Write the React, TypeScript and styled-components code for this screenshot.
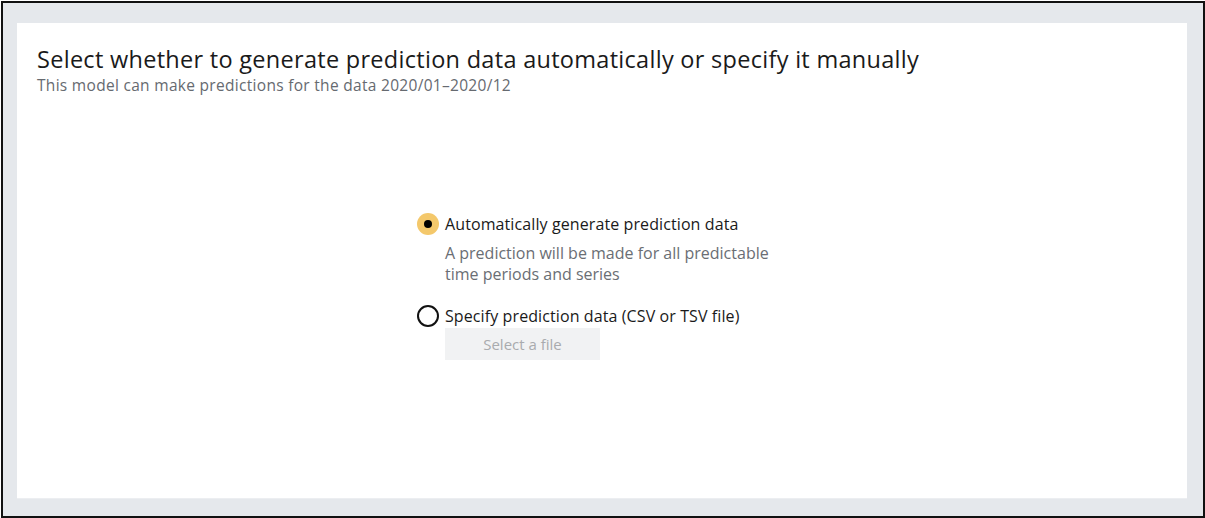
import React from "react";
import styled, { createGlobalStyle } from "styled-components";

const Global = createGlobalStyle`
  html, body { margin: 0; padding: 0; background: #ffffff; }
  body { font-family: "Open Sans", "Noto Sans", sans-serif; }
  * { box-sizing: border-box; }
`;

const Frame = styled.div`
  margin: 1px 0 0 1px;
  width: 1204px;
  height: 517px;
  border: 2px solid #111;
  background: #e5e8ec;
  padding: 20px 16px 17px 14px;
  display: flex;
`;

const Panel = styled.div`
  flex: 1;
  background: #ffffff;
  border-bottom: 1px solid #eceef1;
  padding: 21px 20px 0 20px;
  display: flex;
  flex-direction: column;
`;

const Title = styled.h1`
  margin: 0;
  font-size: 23.5px;
  font-weight: 400;
  line-height: 30px;
  color: #1a1a1a;
  letter-spacing: 0.29px;
`;

const Subtitle = styled.p`
  margin: 2px 0 0 0;
  font-size: 15.5px;
  line-height: 18px;
  color: #666a70;
  letter-spacing: 0.3px;
`;

const Center = styled.div`
  display: flex;
  justify-content: center;
  margin-top: 119px;
`;

const Group = styled.div`
  width: 370px;
  display: flex;
  flex-direction: column;
`;

const Option = styled.label`
  display: flex;
  align-items: center;
  gap: 6px;
  height: 22px;
  cursor: pointer;
`;

const Radio = styled.span<{ $checked?: boolean }>`
  width: 22px;
  height: 22px;
  border-radius: 50%;
  flex: none;
  display: flex;
  align-items: center;
  justify-content: center;
  background: ${(p) => (p.$checked ? "#f4c86b" : "#ffffff")};
  border: ${(p) => (p.$checked ? "none" : "2px solid #111")};
  &::after {
    content: "";
    display: ${(p) => (p.$checked ? "block" : "none")};
    width: 8px;
    height: 8px;
    border-radius: 50%;
    background: #000;
  }
`;

const OptionLabel = styled.span`
  font-size: 16px;
  color: #1a1a1a;
  letter-spacing: 0.1px;
`;

const Description = styled.p`
  margin: 8px 0 0 28px;
  font-size: 16px;
  line-height: 21px;
  color: #6a6e74;
  width: 345px;
`;

const Spacer = styled.div<{ $h: number }>`
  height: ${(p) => p.$h}px;
`;

const FileButton = styled.button`
  margin: 1px 0 0 28px;
  width: 155px;
  height: 32px;
  border: none;
  background: #f1f2f3;
  color: #a9abae;
  font-family: inherit;
  font-size: 15px;
  padding: 0;
  cursor: default;
`;

export default function App() {
  return (
    <>
      <Global />
      <Frame>
        <Panel>
          <Title>Select whether to generate prediction data automatically or specify it manually</Title>
          <Subtitle>This model can make predictions for the data 2020/01–2020/12</Subtitle>
          <Center>
            <Group>
              <Option>
                <Radio $checked />
                <OptionLabel>Automatically generate prediction data</OptionLabel>
              </Option>
              <Description>
                A prediction will be made for all predictable time periods and series
              </Description>
              <Spacer $h={20} />
              <Option>
                <Radio />
                <OptionLabel>Specify prediction data (CSV or TSV file)</OptionLabel>
              </Option>
              <FileButton disabled>Select a file</FileButton>
            </Group>
          </Center>
        </Panel>
      </Frame>
    </>
  );
}
